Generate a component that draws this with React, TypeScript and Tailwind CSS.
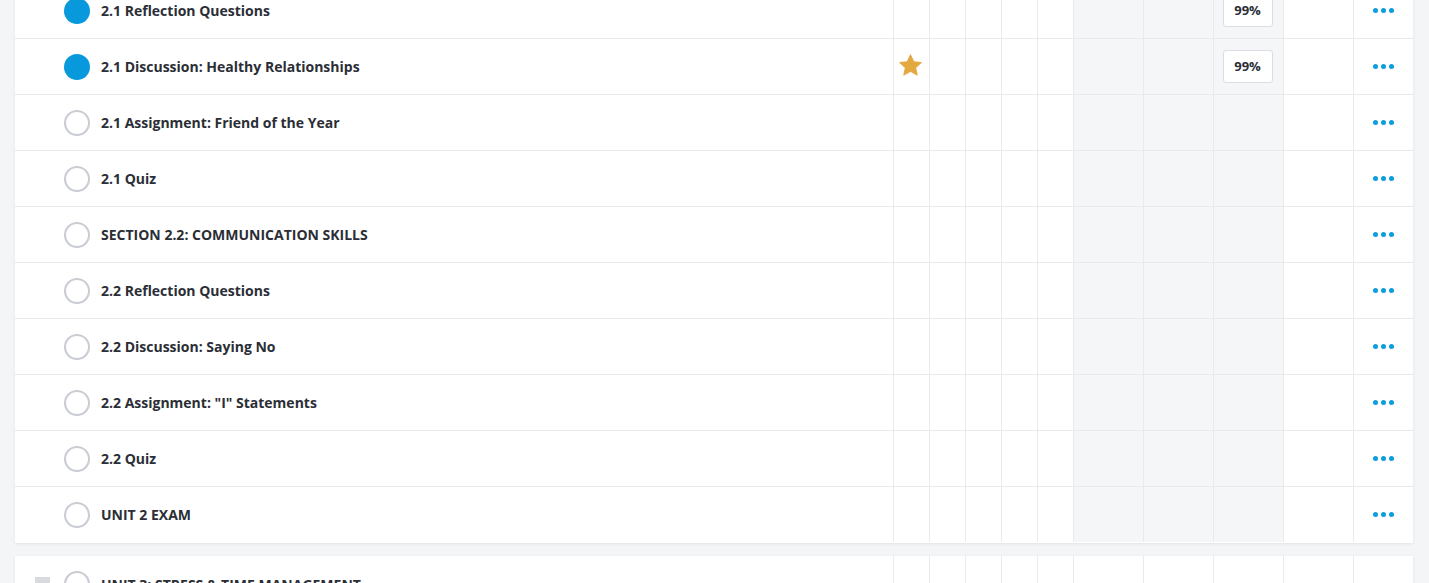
import React from 'react'

type Row = { title: string; done?: boolean; star?: boolean; grade?: string }

const rows: Row[] = [
  { title: '2.1 Reflection Questions', done: true, grade: '99%' },
  { title: '2.1 Discussion: Healthy Relationships', done: true, star: true, grade: '99%' },
  { title: '2.1 Assignment: Friend of the Year' },
  { title: '2.1 Quiz' },
  { title: 'SECTION 2.2: COMMUNICATION SKILLS' },
  { title: '2.2 Reflection Questions' },
  { title: '2.2 Discussion: Saying No' },
  { title: '2.2 Assignment: "I" Statements' },
  { title: '2.2 Quiz' },
  { title: 'UNIT 2 EXAM' },
]

function Star() {
  return (
    <svg width="25" height="25" viewBox="0 0 24 24" className="-translate-x-px -translate-y-px">
      <path
        d="M12 1.8l3.1 6.6 7.1.8-5.3 4.9 1.5 7.1L12 17.6l-6.4 3.6 1.5-7.1L1.8 9.2l7.1-.8z"
        fill="#e4a840"
        stroke="#e4a840"
        strokeWidth="1"
        strokeLinejoin="round"
      />
    </svg>
  )
}

function Dots() {
  return (
    <div className="flex gap-[3px]">
      <span className="h-[5px] w-[5px] rounded-full bg-[#0b9de0]" />
      <span className="h-[5px] w-[5px] rounded-full bg-[#0b9de0]" />
      <span className="h-[5px] w-[5px] rounded-full bg-[#0b9de0]" />
    </div>
  )
}

function Cells({ row, shaded }: { row?: Row; shaded: boolean }) {
  const small = 'w-[36px] shrink-0 border-l border-[#e9eaec] flex items-center justify-center'
  const wide = 'w-[70px] shrink-0 border-l border-[#e9eaec] flex items-center justify-center'
  const grey = shaded ? ' bg-[#f5f6f8]' : ''
  return (
    <>
      <div className={small}>{row?.star && <Star />}</div>
      <div className={small} />
      <div className={small} />
      <div className={small} />
      <div className={small} />
      <div className={wide + grey} />
      <div className={wide + grey} />
      <div className={wide + grey}>
        {row?.grade && (
          <div className="flex h-[33px] w-[50px] -translate-x-px items-center justify-center rounded-[3px] border border-[#dcdde0] bg-white text-[13px] font-bold text-[#2b2e36]">
            {row.grade}
          </div>
        )}
      </div>
      <div className={wide} />
      <div className="w-[60px] shrink-0 border-l border-[#e9eaec] flex items-center justify-center">
        {row && <Dots />}
      </div>
    </>
  )
}

function Circle({ done }: { done?: boolean }) {
  return done ? (
    <span className="h-[26px] w-[26px] shrink-0 rounded-full bg-[#0899dd]" />
  ) : (
    <span className="h-[26px] w-[26px] shrink-0 rounded-full border-2 border-[#c9ccd3] bg-white" />
  )
}

export default function App() {
  return (
    <div
      className="h-[583px] overflow-hidden bg-[#f4f5f7] pl-[15px] pr-[16px]"
      style={{ fontFamily: '"Open Sans", "Noto Sans", sans-serif' }}
    >
      <div className="-mt-[17px] bg-white shadow-[0_1px_3px_rgba(0,0,0,0.08)]">
        {rows.map((r, i) => (
          <div
            key={r.title}
            className={
              'flex h-[56px] border-b ' +
              (i < rows.length - 1 ? 'border-[#e9eaec]' : 'border-transparent')
            }
          >
            <div className="flex flex-1 items-center gap-[11px] pl-[49px]">
              <Circle done={r.done} />
              <span className="text-[14px] font-bold text-[#2b2e36]">{r.title}</span>
            </div>
            <Cells row={r} shaded />
          </div>
        ))}
      </div>
      <div className="mt-[13px] bg-white shadow-[0_1px_3px_rgba(0,0,0,0.08)]">
        <div className="flex h-[56px]">
          <div className="flex flex-1 items-center pl-[20px]">
            <span className="mr-[14px] h-[15px] w-[15px] shrink-0 bg-[#d8dadf]" />
            <Circle />
            <span className="ml-[11px] text-[14px] font-bold text-[#2b2e36]">
              UNIT 3: STRESS &amp; TIME MANAGEMENT
            </span>
          </div>
          <Cells shaded={false} />
        </div>
      </div>
    </div>
  )
}
